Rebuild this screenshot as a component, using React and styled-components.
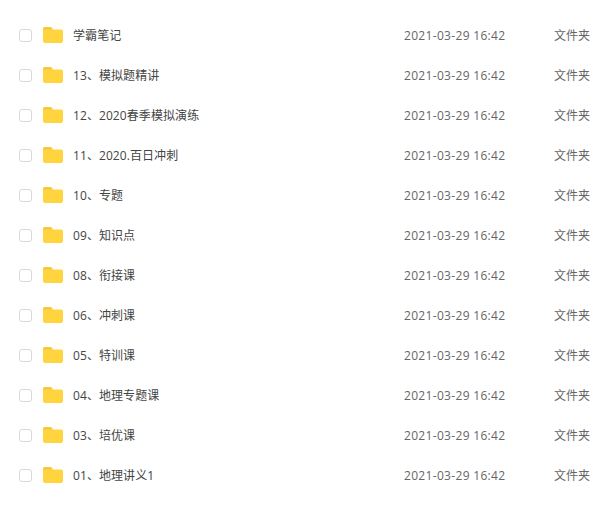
import React from 'react';
import styled, { createGlobalStyle } from 'styled-components';

const GlobalStyle = createGlobalStyle`
  html, body {
    margin: 0;
    padding: 0;
    background: #fff;
  }
`;

const List = styled.div`
  width: 610px;
  height: 513px;
  padding-top: 15px;
  box-sizing: border-box;
  overflow: hidden;
  font-family: "Open Sans", "Noto Sans CJK SC", sans-serif;
  font-size: 12px;
`;

const Row = styled.div`
  display: flex;
  align-items: center;
  height: 40px;
  padding-left: 19px;
`;

const Check = styled.span`
  flex: none;
  width: 11px;
  height: 11px;
  border: 1px solid #d9d9d9;
  border-radius: 3px;
  background: #fff;
`;

const FolderIcon = styled.svg`
  flex: none;
  width: 20px;
  height: 16px;
  margin: -1px 0 0 11px;
`;

const Name = styled.span`
  flex: none;
  width: 331px;
  margin-left: 10px;
  color: #444;
  letter-spacing: 0.08px;
`;

const Time = styled.span`
  flex: none;
  width: 150px;
  color: #666;
  letter-spacing: 0.32px;
`;

const Kind = styled.span`
  flex: none;
  color: #666;
`;

const rows = [
  '学霸笔记',
  '13、模拟题精讲',
  '12、2020春季模拟演练',
  '11、2020.百日冲刺',
  '10、专题',
  '09、知识点',
  '08、衔接课',
  '06、冲刺课',
  '05、特训课',
  '04、地理专题课',
  '03、培优课',
  '01、地理讲义1',
];

const Folder = () => (
  <FolderIcon viewBox="0 0 20 16">
    <path d="M0 2C0 0.8 0.8 0 2 0H7C7.8 0 8.3 0.3 8.8 0.9L10 2.4H18C19.2 2.4 20 3.2 20 4.4V14C20 15.2 19.2 16 18 16H2C0.8 16 0 15.2 0 14Z" fill="#ffd53f" />
    <path d="M0 3.6C0 3 0.5 2.6 1 2.6H10L8.8 0.9C8.3 0.3 7.8 0 7 0H2C0.8 0 0 0.8 0 2Z" fill="#f5c83c" />
  </FolderIcon>
);

export default function App() {
  return (
    <>
      <GlobalStyle />
      <List>
        {rows.map((name, i) => (
          <Row key={i}>
            <Check />
            <Folder />
            <Name>{name}</Name>
            <Time>2021-03-29 16:42</Time>
            <Kind>文件夹</Kind>
          </Row>
        ))}
      </List>
    </>
  );
}
